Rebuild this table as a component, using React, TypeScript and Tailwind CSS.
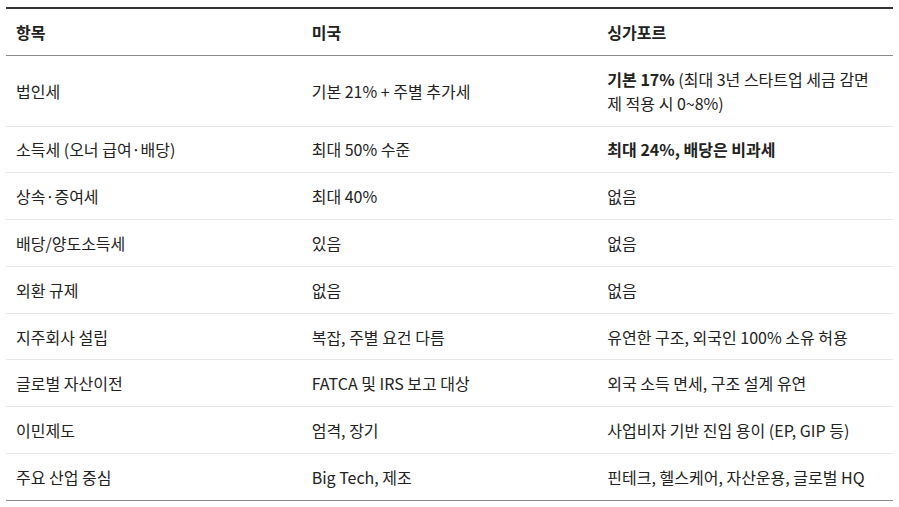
import React from 'react';

const rows: { item: string; us: string; sg: React.ReactNode }[] = [
  {
    item: '법인세',
    us: '기본 21% + 주별 추가세',
    sg: (
      <>
        <strong className="font-bold">기본 17%</strong> (최대 3년 스타트업 세금 감면제 적용 시 0~8%)
      </>
    ),
  },
  {
    item: '소득세 (오너 급여·배당)',
    us: '최대 50% 수준',
    sg: <strong className="font-bold">최대 24%, 배당은 비과세</strong>,
  },
  { item: '상속·증여세', us: '최대 40%', sg: '없음' },
  { item: '배당/양도소득세', us: '있음', sg: '없음' },
  { item: '외환 규제', us: '없음', sg: '없음' },
  { item: '지주회사 설립', us: '복잡, 주별 요건 다름', sg: '유연한 구조, 외국인 100% 소유 허용' },
  { item: '글로벌 자산이전', us: 'FATCA 및 IRS 보고 대상', sg: '외국 소득 면세, 구조 설계 유연' },
  { item: '이민제도', us: '엄격, 장기', sg: '사업비자 기반 진입 용이 (EP, GIP 등)' },
  { item: '주요 산업 중심', us: 'Big Tech, 제조', sg: '핀테크, 헬스케어, 자산운용, 글로벌 HQ' },
];

export default function App() {
  return (
    <div className="bg-white w-[899px] h-[507px] px-[6px] pt-[7px] font-['Noto_Sans_CJK_KR','Noto_Sans',sans-serif] text-[16px] leading-[24px] text-[#222]">
      <table className="w-full table-fixed border-collapse">
        <thead>
          <tr className="border-t-2 border-b border-t-[#333] border-b-[#8a8a8a]">
            <th className="w-1/3 text-left font-bold px-[10px] py-[10.9px]">항목</th>
            <th className="w-1/3 text-left font-bold px-[10px] py-[10.9px]">미국</th>
            <th className="w-1/3 text-left font-bold px-[10px] py-[10.9px]">싱가포르</th>
          </tr>
        </thead>
        <tbody>
          {rows.map((r, i) => (
            <tr
              key={r.item}
              className={i === rows.length - 1 ? 'border-b border-[#8a8a8a]' : 'border-b border-[#e8e8e8]'}
            >
              <td className="align-middle px-[10px] py-[10.9px]">{r.item}</td>
              <td className="align-middle px-[10px] py-[10.9px]">{r.us}</td>
              <td className="align-middle px-[10px] py-[10.9px]">{r.sg}</td>
            </tr>
          ))}
        </tbody>
      </table>
    </div>
  );
}
